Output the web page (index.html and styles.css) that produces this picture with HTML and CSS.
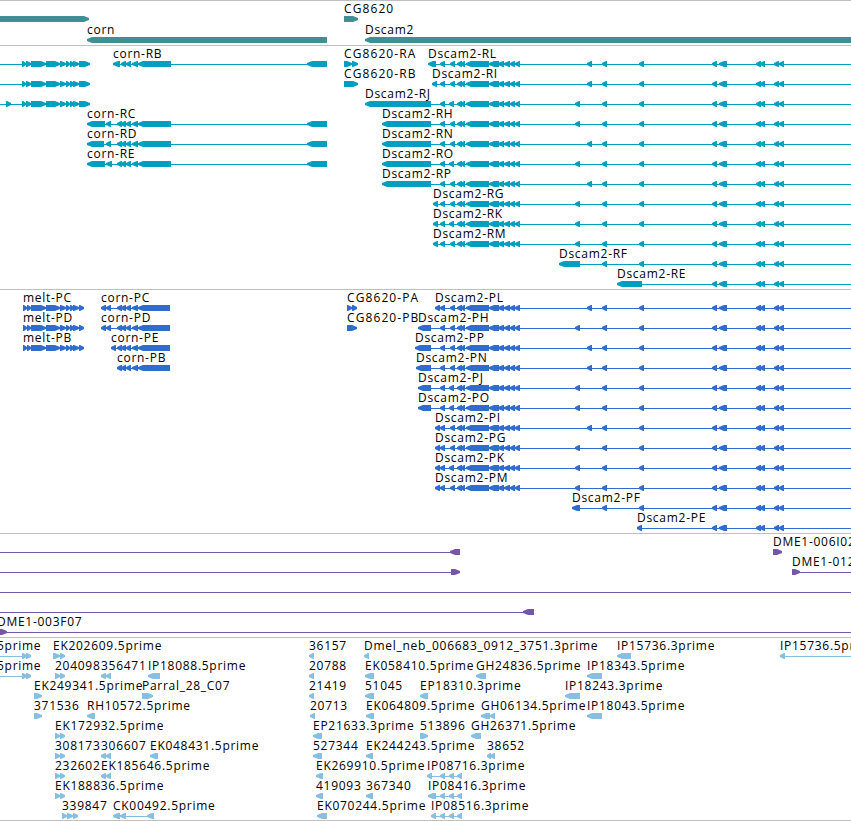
FILE: index.html
```html
<!DOCTYPE html>
<html lang="en">
<head>
  <meta charset="UTF-8">
  <title>Genome Browser</title>
  <link rel="stylesheet" href="styles.css">
</head>
<body>
  <main class="browser">
    <svg class="track genes" id="genes"></svg>
    <svg class="track transcripts" id="transcripts"></svg>
    <svg class="track proteins" id="proteins"></svg>
    <svg class="track clones" id="clones"></svg>
    <svg class="track ests" id="ests"></svg>
  </main>
  <script src="tracks.js"></script>
</body>
</html>
```
FILE: styles.css
```css
body {
  margin: 0;
  background-color: white;
  overflow: hidden;
}
.browser {
  display: flex;
  flex-direction: column;
  width: 851px;
  border-bottom: 1px solid #bfbfbf;
}
.track {
  display: block;
  box-sizing: border-box;
  width: 851px;
  border-top: 1px solid #bfbfbf;
  overflow: hidden;
}
.genes {
  height: 45px;
  color: #3f8f94;
}
.transcripts {
  height: 244px;
  color: #009fc0;
}
.proteins {
  height: 244px;
  color: #2f6ccd;
}
.clones {
  height: 104px;
  color: #7656a8;
}
.ests {
  height: 183px;
  color: #88bedf;
}
.exon {
  fill: currentColor;
}
.intron {
  fill: currentColor;
  shape-rendering: crispEdges;
}
.label {
  font-family: "Open Sans", "Noto Sans", sans-serif;
  font-size: 12px;
  letter-spacing: 0.72px;
  fill: #000;
}
.label.wide {
  letter-spacing: 1.1px;
}
```
FILE: tracks.js
```js
const SVG = 'http://www.w3.org/2000/svg';
const EDGE = 851;

// feature: [row, strand, label, start, end, exons]
function draw(id, pitch, features) {
  const track = document.getElementById(id);
  features.forEach(([row, strand, label, start, end, exons]) => {
    const top = 15 + row * pitch;

    add(track, 'rect', { class: 'intron', x: start, y: top + 3, width: end - start, height: 1 });
    exons.forEach(([a, b]) => {
      const head = Math.min(5, b - a - 1);
      const points = strand === '+'
        ? [[a, top], [b - head, top], [b, top + 2], [b, top + 4], [b - head, top + 6], [a, top + 6]]
        : [[b, top], [a + head, top], [a, top + 2], [a, top + 4], [a + head, top + 6], [b, top + 6]];
      add(track, 'polygon', { class: 'exon', points: points.join(' ') });
    });
    if (label) {
      const name = label.startsWith('CG') ? 'label wide' : 'label';
      add(track, 'text', { class: name, x: start || -3, y: top - 3 }).textContent = label;
    }
  });
}

function add(parent, name, attrs) {
  const el = document.createElementNS(SVG, name);
  for (const key in attrs) el.setAttribute(key, attrs[key]);
  parent.appendChild(el);
  return el;
}

const meltBody = [[31, 46], [46, 60], [60, 66], [66, 70], [70, 74], [73, 79]];
const meltRna = [[22, 26], [26, 31], ...meltBody, [79, 90]];
const meltPep = [[23, 27], [27, 31], ...meltBody, [79, 84]];

const cornBody = [[126, 131], [132, 138], [138, 171]];
const cornUp = [[117, 122], [121, 126], ...cornBody];
const cornPep = [[117, 122], [121, 126], [126, 131], [132, 138], [138, 170]];

const dscamFar = [[712, 717], [719, 727], [756, 761], [760, 765], [774, 779], [779, 784]];
const dscamMid = [[602, 607], [639, 644], ...dscamFar];
function dscam(first, third, alt) {
  return [first, [440, 445], [third, third + 5], [457, 462], [461, 465], [466, 489], [489, 499],
    [498, 504], [504, 510], [510, 515], [515, 520], [alt, alt + 5], ...dscamMid];
}

draw('genes', 21, [
  [0, '+', '', 0, 89, [[0, 89]]],
  [0, '+', 'CG8620', 344, 358, [[344, 358]]],
  [1, '-', 'corn', 87, 327, [[87, 327]]],
  [1, '-', 'Dscam2', 365, EDGE, [[365, EDGE + 5]]]
]);

draw('transcripts', 20, [
  [0, '+', '', 0, 90, meltRna],
  [1, '+', '', 0, 90, meltRna],
  [2, '+', '', 0, 90, [[6, 11], ...meltRna]],
  [0, '-', 'corn-RB', 113, 327, [[113, 120], [121, 126], ...cornBody, [307, 327]]],
  [3, '-', 'corn-RC', 87, 327, [[87, 105], [106, 111], ...cornUp, [307, 327]]],
  [4, '-', 'corn-RD', 87, 327, [[87, 104], [106, 111], ...cornUp, [307, 327]]],
  [5, '-', 'corn-RE', 87, 327, [[87, 105], [106, 112], ...cornUp, [307, 327]]],
  [0, '+', 'CG8620-RA', 344, 358, [[344, 352], [352, 358]]],
  [1, '+', 'CG8620-RB', 344, 358, [[344, 358]]],
  [0, '-', 'Dscam2-RL', 428, EDGE, dscam([428, 436], 450, 587)],
  [1, '-', 'Dscam2-RI', 432, EDGE, dscam([432, 437], 450, 587)],
  [2, '-', 'Dscam2-RJ', 365, EDGE, dscam([365, 431], 449, 575)],
  [3, '-', 'Dscam2-RH', 382, EDGE, dscam([382, 431], 450, 575)],
  [4, '-', 'Dscam2-RN', 382, EDGE, dscam([382, 431], 450, 587)],
  [5, '-', 'Dscam2-RO', 382, EDGE, dscam([382, 431], 449, 575)],
  [6, '-', 'Dscam2-RP', 382, EDGE, dscam([382, 431], 450, 587)],
  [7, '-', 'Dscam2-RG', 433, EDGE, dscam([433, 438], 450, 575)],
  [8, '-', 'Dscam2-RK', 433, EDGE, dscam([433, 438], 449, 575)],
  [9, '-', 'Dscam2-RM', 433, EDGE, dscam([433, 438], 450, 575)],
  [10, '-', 'Dscam2-RF', 559, EDGE, [[559, 580], ...dscamMid]],
  [11, '-', 'Dscam2-RE', 617, EDGE, [[617, 642], ...dscamFar]]
]);

draw('proteins', 20, [
  [0, '+', 'melt-PC', 23, 84, meltPep],
  [1, '+', 'melt-PD', 23, 84, meltPep],
  [2, '+', 'melt-PB', 23, 84, meltPep],
  [0, '-', 'corn-PC', 101, 170, [[101, 106], [106, 111], ...cornPep]],
  [1, '-', 'corn-PD', 101, 170, [[101, 106], [106, 111], ...cornPep]],
  [2, '-', 'corn-PE', 111, 170, [[111, 116], ...cornPep]],
  [3, '-', 'corn-PB', 117, 170, cornPep],
  [0, '+', 'CG8620-PA', 347, 357, [[347, 352], [352, 357]]],
  [1, '+', 'CG8620-PB', 347, 357, [[347, 357]]],
  [0, '-', 'Dscam2-PL', 435, EDGE, dscam([435, 440], 450, 587)],
  [1, '-', 'Dscam2-PH', 418, EDGE, dscam([418, 431], 450, 575)],
  [2, '-', 'Dscam2-PP', 415, EDGE, dscam([415, 431], 450, 587)],
  [3, '-', 'Dscam2-PN', 416, EDGE, dscam([416, 431], 450, 587)],
  [4, '-', 'Dscam2-PJ', 418, EDGE, dscam([418, 431], 449, 575)],
  [5, '-', 'Dscam2-PO', 418, EDGE, dscam([418, 431], 449, 575)],
  [6, '-', 'Dscam2-PI', 435, EDGE, dscam([435, 440], 450, 587)],
  [7, '-', 'Dscam2-PG', 435, EDGE, dscam([435, 440], 450, 575)],
  [8, '-', 'Dscam2-PK', 435, EDGE, dscam([435, 440], 449, 575)],
  [9, '-', 'Dscam2-PM', 435, EDGE, dscam([435, 440], 450, 575)],
  [10, '-', 'Dscam2-PF', 572, EDGE, [[572, 580], ...dscamMid]],
  [11, '-', 'Dscam2-PE', 637, EDGE, [[637, 642], ...dscamFar]]
]);

draw('clones', 20, [
  [0, '-', '', 0, 460, [[450, 460]]],
  [0, '+', 'DME1-006I02', 773, 782, [[773, 782]]],
  [1, '+', '', 0, 460, [[451, 460]]],
  [1, '+', 'DME1-012', 792, EDGE, [[792, 800]]],
  [2, '+', '', 0, EDGE, []],
  [3, '-', '', 0, 534, [[523, 534]]],
  [4, '+', 'DME1-003F07', 0, EDGE, [[0, 7]]]
]);

const fwdPair = [[55, 60], [60, 65]];
const revPair = [[101, 106], [106, 111]];
const ipTail = [[440, 445], [449, 454], [457, 462]];

draw('ests', 20, [
  [0, '+', '5prime', 0, 31, [[22, 27], [26, 31]]],
  [0, '+', 'EK202609.5prime', 53, 65, [[53, 60], [60, 65]]],
  [0, '-', '36157', 309, 314, [[309, 314]]],
  [0, '-', 'Dmel_neb_006683_0912_3751.3prime', 364, 369, [[364, 369]]],
  [0, '-', 'IP15736.3prime', 617, 631, [[617, 631]]],
  [0, '-', 'IP15736.5prime', 780, EDGE, [[780, 785]]],

  [1, '+', '5prime', 0, 31, [[22, 27], [26, 31]]],
  [1, '+', '204098', 55, 65, fwdPair],
  [1, '-', '356471', 101, 111, revPair],
  [1, '-', 'IP18088.5prime', 148, 160, [[148, 160]]],
  [1, '-', '20788', 309, 314, [[309, 314]]],
  [1, '-', 'EK058410.5prime', 365, 374, [[365, 374]]],
  [1, '-', 'GH24836.5prime', 476, 486, [[476, 486]]],
  [1, '-', 'IP18343.5prime', 587, 602, [[587, 602]]],

  [2, '+', 'EK249341.5prime', 34, 42, [[34, 42]]],
  [2, '+', 'Parral_28_C07', 142, 153, [[142, 153]]],
  [2, '-', '21419', 309, 314, [[309, 314]]],
  [2, '-', '51045', 365, 374, [[365, 374]]],
  [2, '-', 'EP18310.3prime', 420, 428, [[420, 428]]],
  [2, '-', 'IP18243.3prime', 565, 580, [[565, 580]]],

  [3, '+', '371536', 34, 42, [[34, 42]]],
  [3, '-', 'RH10572.5prime', 87, 95, [[87, 95]]],
  [3, '-', '20713', 310, 315, [[310, 315]]],
  [3, '-', 'EK064809.5prime', 366, 374, [[366, 374]]],
  [3, '-', 'GH06134.5prime', 481, 495, [[481, 490], [490, 495]]],
  [3, '-', 'IP18043.5prime', 587, 602, [[587, 602]]],

  [4, '+', 'EK172932.5prime', 55, 65, fwdPair],
  [4, '-', 'EP21633.3prime', 313, 322, [[313, 322]]],
  [4, '+', '513896', 420, 428, [[420, 428]]],
  [4, '-', 'GH26371.5prime', 471, 481, [[471, 481]]],

  [5, '+', '308173', 55, 65, fwdPair],
  [5, '-', '306607', 101, 111, revPair],
  [5, '-', 'EK048431.5prime', 150, 158, [[150, 158]]],
  [5, '-', '527344', 313, 322, [[313, 322]]],
  [5, '-', 'EK244243.5prime', 366, 373, [[366, 373]]],
  [5, '-', '38652', 487, 495, [[487, 491], [490, 495]]],

  [6, '+', '232602', 55, 65, fwdPair],
  [6, '-', 'EK185646.5prime', 101, 111, revPair],
  [6, '-', 'EK269910.5prime', 316, 323, [[316, 323]]],
  [6, '-', 'IP08716.3prime', 427, 462, [[427, 432], ...ipTail]],

  [7, '+', 'EK188836.5prime', 55, 65, fwdPair],
  [7, '-', '419093', 316, 323, [[316, 323]]],
  [7, '-', '367340', 366, 373, [[366, 373]]],
  [7, '-', 'IP08416.3prime', 428, 462, [[428, 436], ...ipTail]],

  [8, '+', '339847', 62, 78, [[62, 67], [67, 73], [73, 78]]],
  [8, '-', 'CK00492.5prime', 113, 154, [[113, 120], [120, 126], [147, 154]]],
  [8, '-', 'EK070244.5prime', 317, 327, [[317, 327]]],
  [8, '-', 'IP08516.3prime', 431, 462, [[431, 436], ...ipTail]]
]);
```
